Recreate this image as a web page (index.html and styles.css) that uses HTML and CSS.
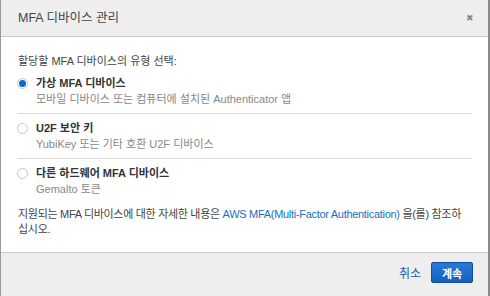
FILE: index.html
```html
<!DOCTYPE html>
<html lang="ko">
<head>
<meta charset="utf-8">
<link rel="stylesheet" href="styles.css">
</head>
<body>
<div class="modal">
  <div class="header">
    <div class="title">MFA 디바이스 관리</div>
    <div class="close">&#x2716;</div>
  </div>
  <div class="body">
    <div class="prompt">할당할 MFA 디바이스의 유형 선택:</div>
    <div class="option sep">
      <span class="radio checked"></span>
      <div class="otext">
        <div class="olabel">가상 MFA 디바이스</div>
        <div class="odesc">모바일 디바이스 또는 컴퓨터에 설치된 Authenticator 앱</div>
      </div>
    </div>
    <div class="option sep">
      <span class="radio"></span>
      <div class="otext">
        <div class="olabel">U2F 보안 키</div>
        <div class="odesc">YubiKey 또는 기타 호환 U2F 디바이스</div>
      </div>
    </div>
    <div class="option">
      <span class="radio"></span>
      <div class="otext">
        <div class="olabel">다른 하드웨어 MFA 디바이스</div>
        <div class="odesc">Gemalto 토큰</div>
      </div>
    </div>
    <div class="note">지원되는 MFA 디바이스에 대한 자세한 내용은 <a class="link">AWS MFA(Multi-Factor Authentication)</a> 을(를) 참조하십시오.</div>
  </div>
  <div class="footer">
    <a class="cancel">취소</a>
    <button class="primary">계속</button>
  </div>
</div>
</body>
</html>
```
FILE: styles.css
```css
html, body { margin: 0; padding: 0; background: #fff; }
body { font-family: "Liberation Sans", Arial, "Noto Sans CJK KR", sans-serif; color: #444; font-size: 11px; }
.modal {
  width: 490px; height: 296px; box-sizing: border-box;
  border-left: 1px solid #9a9a9a; border-right: 2px solid #8a8a8a;
  display: flex; flex-direction: column; background: #fff;
}
.header {
  height: 37px; box-sizing: border-box; background: #eeeeee;
  border-bottom: 1px solid #c8c8c8;
  display: flex; align-items: center; justify-content: space-between;
  padding: 0 14px 3px 17px;
}
.title { font-size: 12.5px; color: #444; }
.close { font-size: 9px; color: #888; padding-top: 2px; }
.body { flex: 1; padding: 16px 16px 0 17px; }
.prompt { line-height: 16px; color: #444; margin-bottom: 6px; }
.option { display: flex; align-items: flex-start; padding: 0 0 5px 0; }
.option.sep { border-bottom: 1px solid #ddd; margin-bottom: 6px; padding-bottom: 6px; }
.radio {
  width: 9px; height: 9px; border: 1px solid #c6c6c6; border-radius: 50%;
  margin: 3px 8px 0 -1px; flex: none; background: #fff; box-sizing: content-box;
  position: relative;
}
.radio.checked::after {
  content: ""; position: absolute; left: 1px; top: 1px; width: 7px; height: 7px;
  border-radius: 50%; background: #1166cc;
}
.olabel { font-weight: bold; color: #333; line-height: 16px; }
.odesc { color: #888; line-height: 16px; }
.note { line-height: 15px; margin-top: 5px; padding-right: 3px; letter-spacing: -0.3px; }
.link { color: #1a6fc0; text-decoration: none; }
.footer {
  height: 44px; box-sizing: border-box; background: #eeeeee; border-top: 1px solid #c8c8c8;
  display: flex; align-items: center; justify-content: flex-end; padding: 0 15px 0 0; gap: 10px;
}
.cancel { color: #1a5fa8; font-size: 12px; text-decoration: none; margin-top: -5px; }
.primary {
  height: 21px; width: 42px; border: 1px solid #0c4f9a; border-radius: 2px;
  background: linear-gradient(#2b7bd6, #125fbd); color: #fff; font-weight: bold;
  font-family: inherit; font-size: 11px; padding: 0; margin-top: -4px;
}
```
